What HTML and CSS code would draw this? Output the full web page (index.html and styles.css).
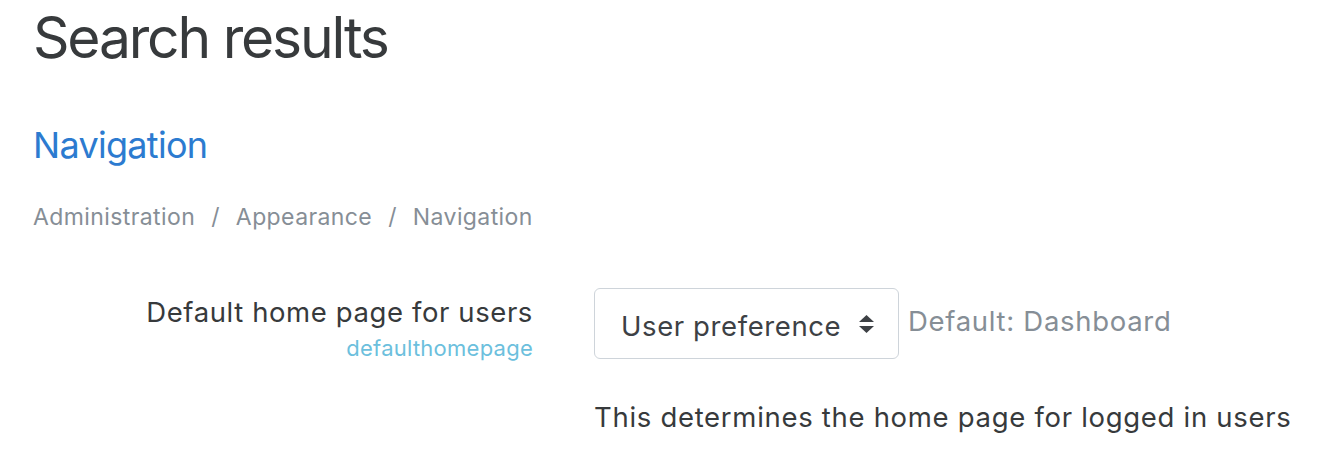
FILE: index.html
```html
<!DOCTYPE html>
<html dir="ltr" lang="en">

<head>
  <meta charset="utf-8">
  <title>Search results</title>
  <link rel="stylesheet" href="styles.css">
</head>

<body>
  <div class="page">
    <h2 class="page-title">Search results</h2>

    <h3 class="section-title"><a href="#">Navigation</a></h3>
    <nav class="crumbs">
      <span>Administration</span>
      <span class="sep">/</span>
      <span>Appearance</span>
      <span class="sep">/</span>
      <span>Navigation</span>
    </nav>

    <div class="setting">
      <div class="setting-label">
        <label for="id_defaulthomepage">Default home page for users</label>
        <span class="setting-name">defaulthomepage</span>
      </div>
      <div class="setting-body">
        <div class="setting-control">
          <div class="select" id="id_defaulthomepage">
            <span class="select-text">User preference</span>
            <svg class="select-caret" width="15" height="18" viewBox="0 0 15 18">
              <path d="M7.5 0 L15 7 L0 7 Z" />
              <path d="M0 11 L15 11 L7.5 18 Z" />
            </svg>
          </div>
          <span class="default">Default: Dashboard</span>
        </div>
        <p class="desc">This determines the home page for logged in users</p>
      </div>
    </div>
  </div>
</body>

</html>
```

FILE: styles.css
```css
html,
body {
  margin: 0;
  background: #fff;
}

body {
  font-family: Inter, "Liberation Sans", sans-serif;
  color: #373a3c;
}

.page {
  padding: 0 0 0 33px;
}

.page-title {
  margin: 0;
  padding-top: 4px;
  font-size: 57px;
  font-weight: 400;
  line-height: 68px;
  letter-spacing: -2.2px;
  color: #373a3c;
}

.section-title {
  margin: 51px 0 0;
  font-size: 36px;
  font-weight: 400;
  line-height: 44px;
  letter-spacing: -0.7px;
}

.section-title a {
  color: #2c7bd0;
  text-decoration: none;
}

.crumbs {
  margin-top: 35px;
  display: flex;
  gap: 16px;
  font-size: 23px;
  line-height: 30px;
  letter-spacing: 0.4px;
  color: #868e96;
}

.setting {
  margin-top: 56px;
  display: grid;
  grid-template-columns: 500px 1fr;
  column-gap: 61px;
}

.setting-label {
  display: flex;
  flex-direction: column;
  align-items: flex-end;
  padding-top: 6px;
}

.setting-label label {
  font-size: 27.5px;
  line-height: 36px;
  letter-spacing: 0.6px;
  color: #373a3c;
}

.setting-name {
  margin-top: 3px;
  font-size: 22px;
  line-height: 30px;
  letter-spacing: 0.25px;
  color: #6cbfdd;
}

.setting-control {
  display: flex;
  align-items: center;
  gap: 9px;
}

.select {
  box-sizing: border-box;
  width: 305px;
  height: 71px;
  padding: 0 24px 0 26px;
  display: flex;
  align-items: center;
  justify-content: space-between;
  border: 1px solid #ced4da;
  border-radius: 6px;
  font-size: 27.5px;
  letter-spacing: 0.6px;
  color: #3d4145;
}

.select-text {
  padding-top: 4px;
}

.select-caret {
  fill: #3d4145;
}

.default {
  margin-bottom: 6px;
  font-size: 27.5px;
  letter-spacing: 0.7px;
  color: #868e96;
}

.desc {
  margin: 40px 0 0;
  font-size: 27.5px;
  line-height: 36px;
  letter-spacing: 0.7px;
  color: #373a3c;
}
```
